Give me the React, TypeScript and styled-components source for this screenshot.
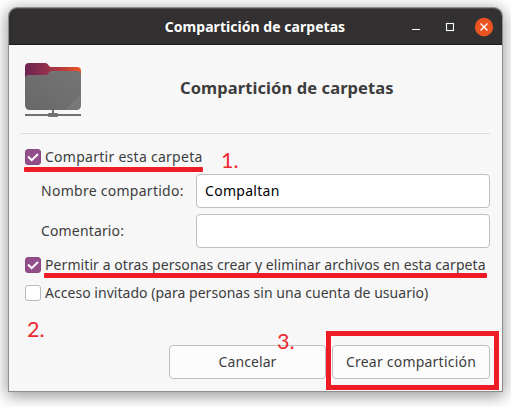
import React from "react";
import styled, { createGlobalStyle } from "styled-components";

const GlobalStyle = createGlobalStyle`
  * { box-sizing: border-box; }
  body { margin: 0; background: #fff; overflow: hidden; }
`;

const Desktop = styled.div`
  width: 511px;
  height: 407px;
  padding: 8px 9px;
  overflow: hidden;
  background: #fff;
  font-family: "Noto Sans", "Open Sans", sans-serif;
  font-size: 14px;
  color: #3d3d3d;
`;

const Window = styled.main`
  position: relative;
  width: 493px;
  height: 383px;
  border-radius: 8px 8px 0 0;
  background: #f7f7f7;
  box-shadow: 0 0 0 1px #8e8e8e, 0 3px 16px 2px rgba(0, 0, 0, 0.42);
`;

const TitleBar = styled.header`
  display: grid;
  grid-template-columns: 1fr auto;
  align-items: center;
  height: 37px;
  padding: 0 8px 0 0;
  border-radius: 8px 8px 0 0;
  border-top: 1px solid #4c4a4a;
  border-bottom: 1px solid #1d1b1b;
  background: #323030;
`;

const Title = styled.div`
  padding-left: 101px;
  text-align: center;
  color: #fff;
`;

const Controls = styled.div`
  display: flex;
  align-items: center;
  width: 94px;
  height: 24px;
`;

const Text = styled.span<{ $spacing?: number; $size?: number; $bold?: boolean }>`
  display: inline-block;
  white-space: nowrap;
  line-height: 20px;
  letter-spacing: ${(p) => p.$spacing ?? 0}px;
  font-size: ${(p) => p.$size ?? 14}px;
  font-weight: ${(p) => (p.$bold ? 700 : 400)};
`;

const Content = styled.div`
  padding: 0 12px;
`;

const Banner = styled.section`
  display: grid;
  grid-template-columns: 64px 1fr;
  height: 89px;
  border-bottom: 1px solid #dcdcdc;
`;

const BannerIcon = styled.svg`
  display: block;
  width: 64px;
  height: 64px;
  margin-top: 14px;
`;

const BannerTitle = styled.h1`
  margin: 33px 0 0;
  padding-left: 95px;
  font-size: 16.5px;
  line-height: 20px;
`;

const CheckRow = styled.label<{ $top: number }>`
  display: flex;
  gap: 4px;
  height: 16px;
  margin: ${(p) => p.$top}px 0 0 4px;
  align-items: center;
`;

const Box = styled.span<{ $checked?: boolean }>`
  display: flex;
  flex: none;
  width: 16px;
  height: 16px;
  border-radius: 3px;
  border: 1px solid ${(p) => (p.$checked ? "#8a4881" : "#b9b9b9")};
  background: ${(p) => (p.$checked ? "#924d8b" : "#fff")};
`;

const Field = styled.label<{ $top: number }>`
  display: grid;
  grid-template-columns: 155px 294px;
  align-items: center;
  margin: ${(p) => p.$top}px 0 0 20px;
  height: 34px;
`;

const Entry = styled.span`
  display: flex;
  align-items: center;
  height: 34px;
  padding: 0 8px;
  border: 1px solid #bfbfbf;
  border-radius: 4px;
  background: #fff;
  color: #000;
`;

const Actions = styled.footer`
  display: flex;
  justify-content: flex-end;
  gap: 6px;
  margin-top: 44px;
`;

const Button = styled.button<{ $width: number }>`
  width: ${(p) => p.$width}px;
  height: 34px;
  padding: 0;
  border: 1px solid #c0c0c0;
  border-radius: 4px;
  background: #fcfcfc;
  color: inherit;
  font: inherit;
`;

const Underline = styled.div<{ $x: number; $y: number; $width: number }>`
  position: absolute;
  left: ${(p) => p.$x}px;
  top: ${(p) => p.$y}px;
  width: ${(p) => p.$width}px;
  height: 5px;
  border-radius: 1px;
  background: #ee1c24;
`;

const Highlight = styled.div`
  position: absolute;
  left: 317px;
  top: 323px;
  width: 173px;
  height: 59px;
  border: 5px solid #ee1c24;
`;

const Step = styled.span<{ $x: number; $y: number }>`
  position: absolute;
  left: ${(p) => p.$x}px;
  top: ${(p) => p.$y}px;
  font-family: Lato, "Noto Sans", sans-serif;
  font-size: 21.5px;
  line-height: 24px;
  color: #ed2930;
`;

const FolderIcon = () => (
  <BannerIcon viewBox="0 0 64 64">
    <defs>
      <linearGradient id="back" x1="4" y1="0" x2="60" y2="0" gradientUnits="userSpaceOnUse">
        <stop offset="0" stopColor="#6b2553" />
        <stop offset="0.4" stopColor="#95324a" />
        <stop offset="0.65" stopColor="#b83b3d" />
        <stop offset="1" stopColor="#ec5524" />
      </linearGradient>
      <linearGradient id="front" x1="0" y1="1" x2="1" y2="0">
        <stop offset="0" stopColor="#686868" />
        <stop offset="1" stopColor="#757575" />
      </linearGradient>
    </defs>
    <path d="M8 4h16.500c1.200 0 1.800.8 2.500 1.600L29 8H56q4 0 4 4v12H4V8q0-4 4-4z" fill="url(#back)" />
    <path d="M8 16h16c2 0 2.500-.5 3.700-2l1-1.200c.7-.7 1.400-.8 2.300-.8h25q4 0 4 4v30q0 5-5 5H9q-5 0-5-5V20q0-4 4-4z" fill="url(#front)" />
    <path d="M60 35v11q0 5-5 5H44z" fill="#808080" opacity=".55" />
    <path d="M31 51h2v3h-2zM4 55h56v2H4z" fill="#707070" />
    <rect x="27" y="54" width="10" height="4" rx="1" fill="#707070" />
  </BannerIcon>
);

const WindowIcons = () => (
  <svg width="94" height="24" viewBox="0 0 94 24" fill="none" stroke="#fff">
    <path d="M12 14.500h8" />
    <rect x="46.500" y="8.500" width="7" height="7" strokeWidth="1.100" />
    <circle cx="84" cy="12" r="9.200" fill="#e95420" stroke="none" />
    <path d="M80.500 8.500l7 7M87.500 8.500l-7 7" strokeWidth="1.400" />
  </svg>
);

const Check = ({ checked = false }: { checked?: boolean }) => (
  <Box $checked={checked}>
    {checked && (
      <svg width="14" height="14" viewBox="0 0 14 14" fill="none" stroke="#fff" strokeWidth="1.900">
        <path d="M2 6.500l3.700 3.700L12 4" />
      </svg>
    )}
  </Box>
);

export default function App() {
  return (
    <Desktop>
      <GlobalStyle />
      <Window>
        <TitleBar>
          <Title><Text $bold $spacing={0.04}>Compartición de carpetas</Text></Title>
          <Controls><WindowIcons /></Controls>
        </TitleBar>
        <Content>
          <Banner>
            <FolderIcon />
            <BannerTitle><Text $bold $size={16.5} $spacing={0.09}>Compartición de carpetas</Text></BannerTitle>
          </Banner>
          <CheckRow $top={15}><Check checked /><Text $spacing={0.27}>Compartir esta carpeta</Text></CheckRow>
          <Field $top={9}>
            <Text $spacing={0.27}>Nombre compartido:</Text>
            <Entry><Text $spacing={0.28}>Compaltan</Text></Entry>
          </Field>
          <Field $top={6}><Text $spacing={0.15}>Comentario:</Text><Entry /></Field>
          <CheckRow $top={9}><Check checked /><Text $spacing={0.08}>Permitir a otras personas crear y eliminar archivos en esta carpeta</Text></CheckRow>
          <CheckRow $top={12}><Check /><Text $spacing={0.03}>Acceso invitado (para personas sin una cuenta de usuario)</Text></CheckRow>
          <Actions>
            <Button $width={157}><Text $spacing={0.1}>Cancelar</Text></Button>
            <Button $width={158}><Text $spacing={0.22}>Crear compartición</Text></Button>
          </Actions>
        </Content>
        <Underline $x={15} $y={159} $width={179} />
        <Underline $x={35} $y={265} $width={443} />
        <Step $x={212} $y={140}>1.</Step>
        <Step $x={18} $y={309}>2.</Step>
        <Step $x={268} $y={321}>3.</Step>
        <Highlight />
      </Window>
    </Desktop>
  );
}
